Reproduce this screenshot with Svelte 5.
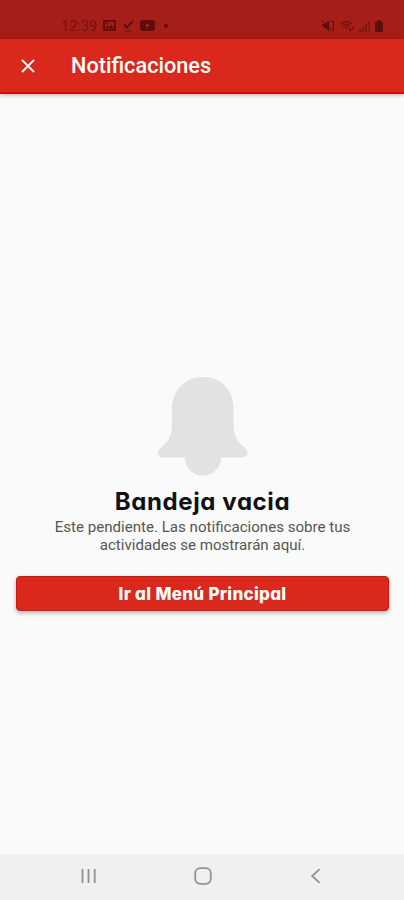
<script lang="ts">
  let title: string = 'Notificaciones'
  let open: boolean = $state(true)

  const close = () => {
    open = false
  }
</script>

<div class="screen">
  <div class="status-bar">
    <div class="status-left">
      <span class="time">12:39</span>
      <svg class="image" width="13" height="11" viewBox="0 0 13 11">
        <path
          fill-rule="evenodd"
          d="M1.5 0h10Q13 0 13 1.5v8Q13 11 11.5 11h-10Q0 11 0 9.5v-8Q0 0 1.5 0zM2 1.7v7.6h9V1.7zM2.3 8.5l2.3-3 1.8 1.7 2-2.7 2.5 4zM3 2.5h2v2H3z"
        />
      </svg>
      <svg class="check" width="11" height="12" viewBox="0 0 11 12">
        <path d="M1 4.5l3 3L10 1" fill="none" stroke="currentColor" stroke-width="1.8" />
        <path d="M1 11h8" fill="none" stroke="currentColor" stroke-width="1.2" opacity=".6" />
      </svg>
      <svg class="video" width="15" height="11" viewBox="0 0 15 11">
        <path fill-rule="evenodd" d="M3 0h9q3 0 3 3v5q0 3-3 3H3q-3 0-3-3V3q0-3 3-3zM6 3v5l4-2.5z" />
      </svg>
      <span class="dot"></span>
    </div>
    <div class="status-right">
      <svg width="13" height="12" viewBox="0 0 13 12">
        <path d="M0 4h3l4-3.5v11L4 8H2z" />
        <path d="M0 1l11 10M8.5 1.5h3v9" fill="none" stroke="currentColor" stroke-width="1" />
      </svg>
      <svg class="wifi" width="15" height="12" viewBox="0 0 15 12">
        <path d="M1 4q5.500-5 11 0M3 6q3.500-3 7 0M5 8q1.500-1.500 3 0" fill="none" stroke="currentColor" stroke-width="1.4" />
        <path d="M9 8h2v4L9 10zM12 7h2l-1 4z" />
      </svg>
      <svg class="signal" width="12" height="12" viewBox="0 0 12 12">
        <path d="M0 9h2v3H0zM3 7h2v5H3zM6 4h2v8H6z" />
        <path d="M9.500 1.500h1v10h-1z" fill="none" stroke="currentColor" stroke-width=".6" />
      </svg>
      <svg class="battery" width="8" height="12" viewBox="0 0 8 12">
        <path d="M2.500 0h3v1.500H7q1 0 1 1V11q0 1-1 1H1q-1 0-1-1V2.500q0-1 1-1h1.500z" />
      </svg>
    </div>
  </div>

  <header class="app-bar">
    <button class="close" aria-label="Cerrar" onclick={close}>
      <svg width="14" height="14" viewBox="0 0 14 14">
        <path d="M1 1l12 12M13 1L1 13" fill="none" stroke="currentColor" stroke-width="1.8" />
      </svg>
    </button>
    <h1>{title}</h1>
  </header>

  <main>
    {#if open}
      <svg class="bell" width="90" height="99" viewBox="0 0 90 99">
        <path
          d="M45 0C27 0 14 13 14 32v13c0 11-2 17-7 22-5 4-7 6-7 8.500C0 78.500 2.500 80.500 6 80.500h21c0 10.500 8 18 18 18s18-7.500 18-18h20c4 0 6.500-2 6.500-5 0-2.500-2-4.500-7-8.500-5-5-7-11-7-22V32C76 13 63 0 45 0z"
        />
      </svg>
      <h2>Bandeja vacia</h2>
      <p>Este pendiente. Las notificaciones sobre tus<br />actividades se mostrarán aquí.</p>
      <button class="action" onclick={close}>Ir al Menú Principal</button>
    {/if}
  </main>

  <nav>
    <svg width="16" height="16" viewBox="0 0 16 16">
      <path d="M1.500 1v14M7.500 1v14M13.700 1v14" />
    </svg>
    <svg width="18" height="18" viewBox="0 0 18 18">
      <rect x="1.200" y="1.200" width="15.600" height="15.600" rx="5" />
    </svg>
    <svg width="16" height="16" viewBox="0 0 16 16">
      <path d="M11.700 1.200L4.200 8l7.500 6.800" />
    </svg>
  </nav>
</div>

<style>
  :global(body) {
    margin: 0;
  }

  .screen {
    display: flex;
    flex-direction: column;
    height: 900px;
    background-color: #fafafa;
    font-family: Roboto, sans-serif;
  }

  .status-bar {
    display: flex;
    justify-content: space-between;
    box-sizing: border-box;
    height: 39px;
    padding: 13px 21px 0 61px;
    background-color: #a51e17;
    color: #5b0e0b;
  }

  .status-left,
  .status-right {
    display: flex;
    align-items: center;
    height: 25px;
  }

  .status-bar svg {
    fill: currentColor;
  }

  .time {
    width: 42px;
    padding-top: 1px;
    font-size: 14.5px;
    color: #75130f;
  }

  .check {
    margin-left: 7px;
  }

  .video {
    margin-left: 6px;
  }

  .dot {
    width: 4px;
    height: 4px;
    margin-left: 9px;
    border-radius: 50%;
    background-color: currentColor;
  }

  .wifi {
    margin-left: 5px;
    opacity: 0.75;
  }

  .signal {
    margin-left: 4px;
    opacity: 0.5;
  }

  .battery {
    margin-left: 4px;
  }

  .app-bar {
    display: flex;
    align-items: center;
    box-sizing: border-box;
    height: 55px;
    padding-left: 21px;
    border-bottom: 2px solid #cf0d0b;
    background-color: #db281c;
    color: #fff;
    box-shadow: 0 1px 4px rgba(0, 0, 0, 0.3);
  }

  .close {
    display: flex;
    padding: 0;
    border: none;
    background: none;
    color: inherit;
    cursor: pointer;
  }

  h1 {
    margin: 0 0 0 36px;
    font-size: 21.7px;
    font-weight: 500;
    line-height: 24px;
  }

  main {
    display: flex;
    flex: 1;
    flex-direction: column;
    align-items: center;
    padding: 283px 15px 0 16px;
  }

  .bell {
    fill: #e2e2e2;
  }

  h2 {
    margin: 10px 0 0;
    font-family: Inter, sans-serif;
    font-feature-settings: 'cv11';
    font-size: 24px;
    font-weight: 700;
    letter-spacing: 0.6px;
    line-height: 32px;
    color: #111;
  }

  p {
    margin: 0;
    font-size: 15.1px;
    line-height: 18px;
    text-align: center;
    color: #555;
  }

  .action {
    width: 100%;
    height: 35px;
    margin-top: 22px;
    padding: 0;
    border: 1px solid #d3140f;
    border-radius: 4px;
    background-color: #db281c;
    color: #fff;
    font-family: Inter, sans-serif;
    font-feature-settings: 'cv11';
    font-size: 17px;
    font-weight: 800;
    letter-spacing: 0.3px;
    box-shadow: 0 2px 4px rgba(0, 0, 0, 0.3);
    cursor: pointer;
  }

  nav {
    display: flex;
    justify-content: space-between;
    align-items: center;
    box-sizing: border-box;
    height: 46px;
    padding: 0 80px 2px 81px;
    background-color: #f0f0f0;
  }

  nav svg {
    fill: none;
    stroke: #929292;
    stroke-width: 1.8;
  }
</style>
